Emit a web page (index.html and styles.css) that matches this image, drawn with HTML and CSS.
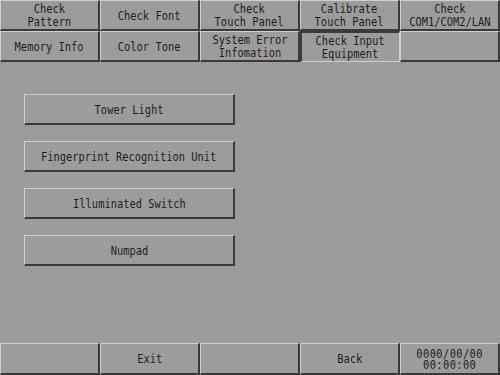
FILE: index.html
```html
<!DOCTYPE html>
<html>
<head>
<meta charset="utf-8">
<link rel="stylesheet" href="styles.css">
</head>
<body>
<div class="page">
  <div class="tabs">
    <div class="btn"><span class="t">Check
Pattern</span></div>
    <div class="btn"><span class="t">Check Font</span></div>
    <div class="btn"><span class="t">Check
Touch Panel</span></div>
    <div class="btn"><span class="t">Calibrate
Touch Panel</span></div>
    <div class="btn"><span class="t">Check
COM1/COM2/LAN</span></div>
    <div class="btn"><span class="t">Memory Info</span></div>
    <div class="btn"><span class="t">Color Tone</span></div>
    <div class="btn"><span class="t">System Error
Infomation</span></div>
    <div class="btn pressed"><span class="t">Check Input
Equipment</span></div>
    <div class="btn"></div>
  </div>
  <div class="content">
    <div class="btn item"><span class="t">Tower Light</span></div>
    <div class="btn item"><span class="t">Fingerprint Recognition Unit</span></div>
    <div class="btn item"><span class="t">Illuminated Switch</span></div>
    <div class="btn item"><span class="t">Numpad</span></div>
  </div>
  <div class="footer">
    <div class="btn"></div>
    <div class="btn"><span class="t">Exit</span></div>
    <div class="btn"></div>
    <div class="btn"><span class="t">Back</span></div>
    <div class="btn clock"><span class="t">0000/00/00
00:00:00</span></div>
  </div>
</div>
</body>
</html>
```
FILE: styles.css
```css
html, body {
  margin: 0;
  padding: 0;
}
body {
  background: #9c9c9c;
  font-family: "DejaVu Sans Mono", "Liberation Mono", monospace;
  font-size: 13px;
  color: #1c1c1c;
}
.page {
  width: 500px;
  height: 375px;
  display: flex;
  flex-direction: column;
  overflow: hidden;
}
.btn {
  box-sizing: border-box;
  display: flex;
  align-items: center;
  justify-content: center;
  background: #9c9c9c;
  border-top: 1px solid #cfcfcf;
  border-left: 1px solid #cfcfcf;
  border-right: 2px solid #3a3a3a;
  border-bottom: 2px solid #3a3a3a;
  overflow: visible;
}
.btn.pressed {
  border-top: 2px solid #3a3a3a;
  border-left: 2px solid #3a3a3a;
  border-right: 1px solid #cfcfcf;
  border-bottom: 1px solid #cfcfcf;
}
.t {
  display: inline-block;
  white-space: pre;
  text-align: center;
  line-height: 13px;
  transform: scaleX(0.8);
  flex: none;
}
.tabs {
  display: grid;
  grid-template-columns: repeat(5, 100px);
  grid-template-rows: 31px 31px;
}
.content {
  flex: 1;
  display: flex;
  flex-direction: column;
  gap: 16px;
  padding: 32px 0 0 24px;
}
.item {
  width: 211px;
  height: 31px;
}
.footer {
  display: grid;
  grid-template-columns: repeat(5, 100px);
  height: 32px;
}
.clock .t {
  line-height: 11px;
  letter-spacing: 0.5px;
}
```
